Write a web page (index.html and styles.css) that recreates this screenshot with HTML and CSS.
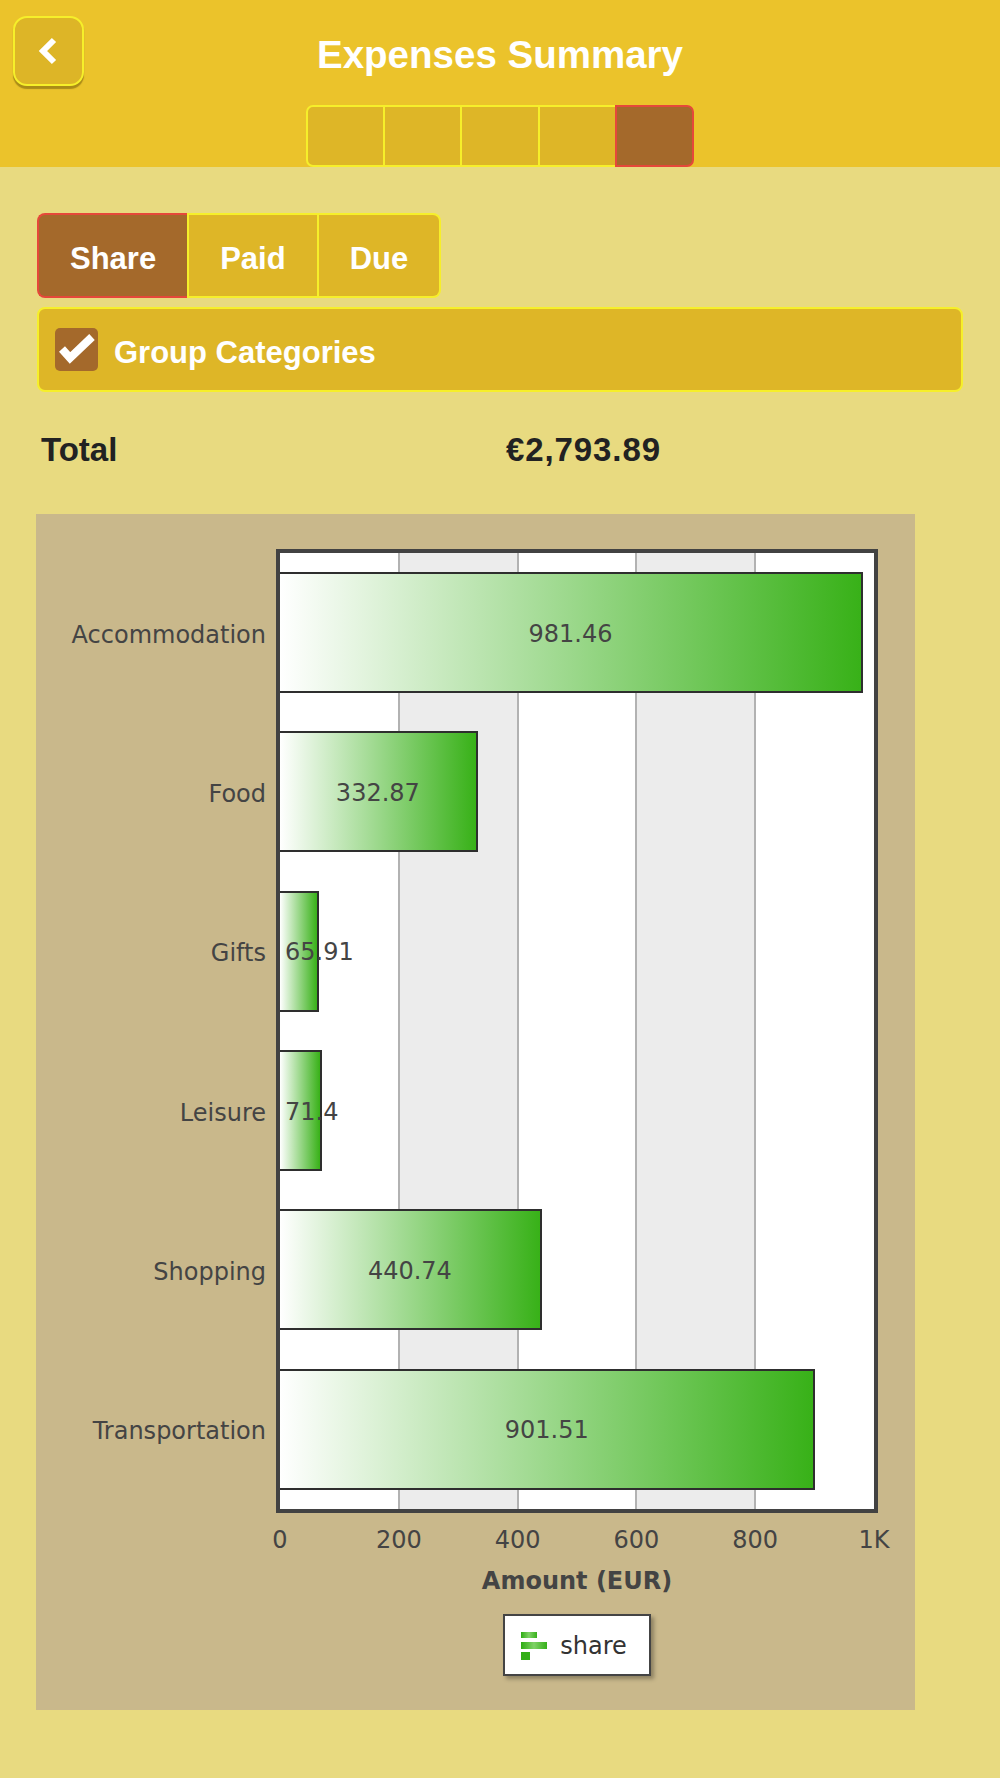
FILE: index.html
```html
<!DOCTYPE html>
<html lang="en">
<head>
<meta charset="utf-8">
<title>Expenses Summary</title>
<link rel="stylesheet" href="styles.css">
</head>
<body>
<header class="topbar">
  <div class="topbar-row">
    <button class="back-btn" aria-label="Back">
      <svg width="67" height="66" viewBox="0 0 67 66"><polyline points="39,22 28,33 39,44" fill="none" stroke="#fff" stroke-width="6" stroke-linecap="butt" stroke-linejoin="miter"/></svg>
    </button>
    <h1 class="title">Expenses Summary</h1>
    <span></span>
  </div>
  <div class="steps">
    <span class="step"></span>
    <span class="step"></span>
    <span class="step"></span>
    <span class="step"></span>
    <span class="step step--active"></span>
  </div>
</header>
<main class="content">
  <div class="tabs">
    <button class="tab tab--active">Share</button>
    <button class="tab">Paid</button>
    <button class="tab">Due</button>
  </div>
  <div class="group-toggle">
    <span class="checkbox"><svg width="43" height="43" viewBox="0 0 43 43"><polyline points="7,21 15,30 37,9" fill="none" stroke="#fff" stroke-width="8" stroke-linejoin="miter"/></svg></span>
    <span class="group-label">Group Categories</span>
  </div>
  <div class="total"><span>Total</span><span class="total-value">€2,793.89</span></div>
  <section class="chart">
    <div class="chart-body">
      <div class="ylabels">
        <div>Accommodation</div>
        <div>Food</div>
        <div>Gifts</div>
        <div>Leisure</div>
        <div>Shopping</div>
        <div>Transportation</div>
      </div>
      <div class="frame">
        <div class="plot">
          <div class="bar" style="width:98.146%">981.46</div>
          <div class="bar" style="width:33.287%">332.87</div>
          <div class="bar bar--narrow" style="width:6.591%">65.91</div>
          <div class="bar bar--narrow" style="width:7.14%">71.4</div>
          <div class="bar" style="width:44.074%">440.74</div>
          <div class="bar" style="width:90.151%">901.51</div>
        </div>
      </div>
    </div>
    <div class="ticks">
      <span>0</span><span>200</span><span>400</span><span>600</span><span>800</span><span>1K</span>
    </div>
    <div class="axis-title">Amount (EUR)</div>
    <div class="legend-row">
      <div class="legend">
        <svg width="26" height="28" viewBox="0 0 26 28">
          <defs>
            <linearGradient id="lg" x1="0" y1="0" x2="1" y2="0">
              <stop offset="0" stop-color="#2fad14"/>
              <stop offset="0.5" stop-color="#7fd266"/>
              <stop offset="1" stop-color="#36b01a"/>
            </linearGradient>
          </defs>
          <rect x="0" y="0" width="16" height="6" fill="url(#lg)"/>
          <rect x="0" y="10" width="26" height="7" fill="url(#lg)"/>
          <rect x="0" y="20" width="9" height="8" fill="#33ae17"/>
        </svg>
        <span>share</span>
      </div>
    </div>
  </section>
</main>
</body>
</html>
```
FILE: styles.css
```css
html {
  background: #e8da80;
}
body {
  margin: 0;
  background: #e8da80;
  font-family: "Liberation Sans", Arial, sans-serif;
}

/* Header */
.topbar {
  background: #ebc32b;
  height: 167px;
  box-sizing: border-box;
  padding: 16px 13px 0;
  display: flex;
  flex-direction: column;
  align-items: center;
}
.topbar-row {
  width: 100%;
  display: grid;
  grid-template-columns: 71px 1fr 71px;
}
.back-btn {
  width: 71px;
  height: 70px;
  box-sizing: border-box;
  border: 2px solid #f6ef2a;
  border-radius: 14px;
  background: #ddb527;
  box-shadow: 0 3px 1px rgba(90, 70, 0, 0.45);
  padding: 0;
  display: block;
}
.back-btn svg {
  display: block;
}
.title {
  margin: 17px 0 0;
  align-self: start;
  text-align: center;
  color: #fff;
  font-size: 38.5px;
  font-weight: bold;
  line-height: 44px;
}
.steps {
  margin-top: 19px;
  display: flex;
}
.step {
  width: 79.4px;
  height: 62px;
  box-sizing: border-box;
  border: 2px solid #f6ef2a;
  background: #deb627;
  margin-left: -2px;
}
.step:first-child {
  margin-left: 0;
  border-radius: 7px 0 0 7px;
}
.step--active {
  background: #a4692b;
  border-color: #e5483a;
  border-radius: 0 7px 7px 0;
}

/* Content */
.content {
  padding: 46px 37px 0;
}
.tabs {
  display: flex;
}
.tab {
  height: 85px;
  box-sizing: border-box;
  padding: 7px 31px 0;
  margin: 0;
  font-family: "Liberation Sans", Arial, sans-serif;
  font-weight: bold;
  font-size: 31px;
  color: #fff;
  background: #deb627;
  border: 2px solid #f6ef2a;
}
.tab:first-child {
  border-radius: 8px 0 0 8px;
}
.tab:last-child {
  border-radius: 0 8px 8px 0;
  border-left: 0;
}
.tab--active {
  background: #a4692b;
  border-color: #e5483a;
  border-right: 0;
}
.group-toggle {
  margin-top: 9px;
  height: 85px;
  box-sizing: border-box;
  border: 2px solid #f6ef2a;
  border-radius: 8px;
  background: #deb627;
  display: flex;
  align-items: center;
  gap: 16px;
  padding-left: 16px;
  color: #fff;
  font-weight: bold;
  font-size: 31px;
}
.group-label {
  padding-top: 7px;
}
.checkbox {
  width: 43px;
  height: 43px;
  border-radius: 5px;
  background: #a4692b;
  display: flex;
}
.total {
  margin-top: 39px;
  display: grid;
  grid-template-columns: 465px auto;
  padding-left: 4px;
  font-size: 33px;
  font-weight: bold;
  color: #222;
  line-height: 37px;
}
.total-value {
  letter-spacing: 0.9px;
}

/* Chart */
.chart {
  margin-top: 46px;
  margin-left: -1px;
  width: 879px;
  background: #c9b88b;
  padding: 35px 0 34px;
  font-family: "DejaVu Sans", Verdana, sans-serif;
  color: #444;
}
.chart-body {
  display: flex;
}
.ylabels {
  width: 240px;
  box-sizing: border-box;
  padding: 4px 10px 4px 0;
  display: grid;
  grid-template-rows: repeat(6, 1fr);
  align-items: center;
  text-align: right;
  font-size: 24px;
}
.ylabels div {
  padding-top: 4px;
}
.frame {
  width: 602px;
  height: 964px;
  box-sizing: border-box;
  border: 4px solid #424242;
}
.plot {
  height: 100%;
  display: grid;
  grid-template-rows: repeat(6, 1fr);
  align-items: center;
  background:
    linear-gradient(to right,
      transparent calc(20% - 1px), #b2b2b2 calc(20% - 1px), #b2b2b2 calc(20% + 1px), transparent calc(20% + 1px),
      transparent calc(40% - 1px), #b2b2b2 calc(40% - 1px), #b2b2b2 calc(40% + 1px), transparent calc(40% + 1px),
      transparent calc(60% - 1px), #b2b2b2 calc(60% - 1px), #b2b2b2 calc(60% + 1px), transparent calc(60% + 1px),
      transparent calc(80% - 1px), #b2b2b2 calc(80% - 1px), #b2b2b2 calc(80% + 1px), transparent calc(80% + 1px)),
    linear-gradient(to right,
      #fff 20%, #ececec 20%, #ececec 40%, #fff 40%, #fff 60%, #ececec 60%, #ececec 80%, #fff 80%);
}
.bar {
  height: 121px;
  box-sizing: border-box;
  border: 2px solid #2e2e2e;
  border-left: 0;
  padding-top: 2px;
  background: linear-gradient(to right, #fff, #38b118);
  display: flex;
  align-items: center;
  justify-content: center;
  font-size: 24px;
  white-space: nowrap;
}
.bar--narrow {
  justify-content: flex-start;
  padding-left: 5px;
}
.ticks {
  display: grid;
  grid-template-columns: repeat(6, 118.8px);
  margin: 13px 0 0 184.6px;
  font-size: 24px;
  line-height: 28px;
  text-align: center;
}
.axis-title {
  width: 602px;
  margin: 13px 0 0 240px;
  text-align: center;
  font-weight: bold;
  font-size: 24px;
  line-height: 28px;
}
.legend-row {
  width: 602px;
  margin: 19px 0 0 240px;
  display: flex;
  justify-content: center;
}
.legend {
  display: flex;
  align-items: center;
  gap: 13px;
  height: 62px;
  box-sizing: border-box;
  border: 2px solid #444;
  background: #fff;
  padding: 2px 22px 0 16px;
  box-shadow: 3px 3px 4px rgba(0, 0, 0, 0.3);
  font-size: 24px;
  color: #333;
}
.legend svg {
  display: block;
}
```
